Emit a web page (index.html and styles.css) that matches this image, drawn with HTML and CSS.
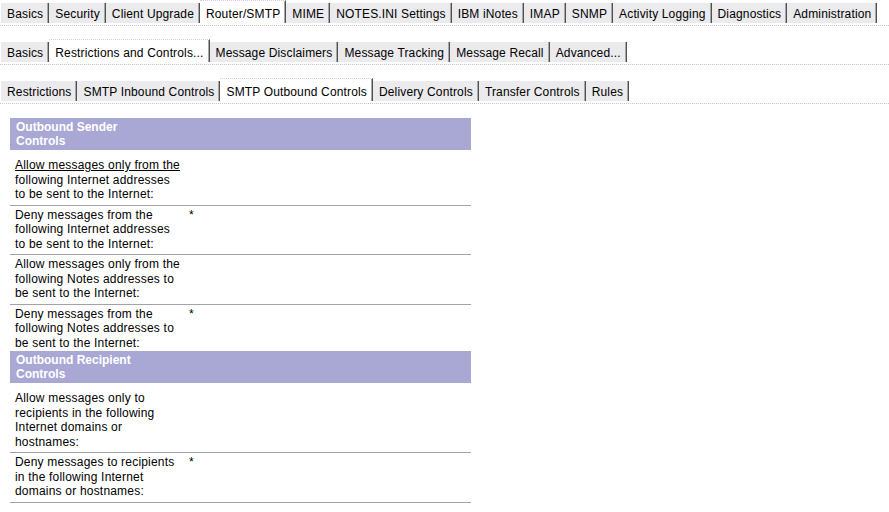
FILE: index.html
```html
<!DOCTYPE html>
<html>
<head>
<meta charset="utf-8">
<link rel="stylesheet" href="styles.css">
</head>
<body>
<div class="tabs">
  <div class="tabbar">
    <span class="tab">Basics</span>
    <span class="tab">Security</span>
    <span class="tab">Client Upgrade</span>
    <span class="tab sel">Router/SMTP</span>
    <span class="tab">MIME</span>
    <span class="tab">NOTES.INI Settings</span>
    <span class="tab">IBM iNotes</span>
    <span class="tab">IMAP</span>
    <span class="tab">SNMP</span>
    <span class="tab">Activity Logging</span>
    <span class="tab">Diagnostics</span>
    <span class="tab">Administration</span>
  </div>
  <div class="tabbar">
    <span class="tab">Basics</span>
    <span class="tab sel">Restrictions and Controls...</span>
    <span class="tab">Message Disclaimers</span>
    <span class="tab">Message Tracking</span>
    <span class="tab">Message Recall</span>
    <span class="tab">Advanced...</span>
  </div>
  <div class="tabbar">
    <span class="tab">Restrictions</span>
    <span class="tab">SMTP Inbound Controls</span>
    <span class="tab sel">SMTP Outbound Controls</span>
    <span class="tab">Delivery Controls</span>
    <span class="tab">Transfer Controls</span>
    <span class="tab">Rules</span>
  </div>
</div>

<div class="form">
  <div class="head"><span class="head-text">Outbound Sender Controls</span></div>
  <div class="row first">
    <div class="label"><span class="link">Allow messages only from the </span>following Internet addresses to be sent to the Internet:</div>
    <div class="value"></div>
  </div>
  <div class="row">
    <div class="label">Deny messages from the following Internet addresses to be sent to the Internet:</div>
    <div class="value">*</div>
  </div>
  <div class="row">
    <div class="label">Allow messages only from the following Notes addresses to be sent to the Internet:</div>
    <div class="value"></div>
  </div>
  <div class="row last">
    <div class="label">Deny messages from the following Notes addresses to be sent to the Internet:</div>
    <div class="value">*</div>
  </div>
  <div class="head"><span class="head-text">Outbound Recipient Controls</span></div>
  <div class="row first">
    <div class="label">Allow messages only to recipients in the following Internet domains or hostnames:</div>
    <div class="value"></div>
  </div>
  <div class="row">
    <div class="label">Deny messages to recipients in the following Internet domains or hostnames:</div>
    <div class="value">*</div>
  </div>
</div>
</body>
</html>
```

FILE: styles.css
```css
html, body {
  margin: 0;
  padding: 0;
  background: #ffffff;
  font-family: "Liberation Sans", Arial, sans-serif;
  font-size: 12px;
  color: #000000;
}

.tabs {
  display: flex;
  flex-direction: column;
  gap: 16px;
  padding-top: 3px;
}

.tabbar {
  display: flex;
  align-items: flex-start;
  padding: 0 0 2px 1px;
  border-bottom: 1px dotted #c9c4cc;
  height: 20px;
}

.tab {
  display: flex;
  align-items: center;
  height: 20px;
  box-sizing: border-box;
  padding: 2px 5px 0 6px;
  background: #ebeaec;
  border-right: 1px solid #505050;
  box-shadow: inset -1px 0 0 #a8a8a8;
  white-space: nowrap;
  line-height: 14px;
  letter-spacing: 0.15px;
}

.tab.sel {
  background: #ffffff;
  height: 23px;
  margin-top: -3px;
  padding-top: 4px;
  border-top: 1px dotted #e0c8e0;
}

.form {
  width: 461px;
  margin: 14px 0 0 10px;
  line-height: 14.5px;
}

.head {
  background: #a9a8d5;
  height: 32px;
  box-sizing: border-box;
  padding: 2px 6px;
  color: #ffffff;
  font-weight: bold;
  line-height: 14px;
}

.head-text {
  display: block;
  width: 150px;
}

.row {
  display: grid;
  grid-template-columns: 176px 1fr;
  padding: 2px 0 3px;
  border-bottom: 1px solid #a6a0aa;
}

.row.first {
  padding-top: 8px;
}

.row.last {
  border-bottom: none;
  padding-bottom: 1px;
}

.label {
  padding-left: 5px;
  padding-right: 5px;
  letter-spacing: 0.2px;
}

.value {
  padding-left: 3px;
}

.link {
  text-decoration: underline;
}
```
